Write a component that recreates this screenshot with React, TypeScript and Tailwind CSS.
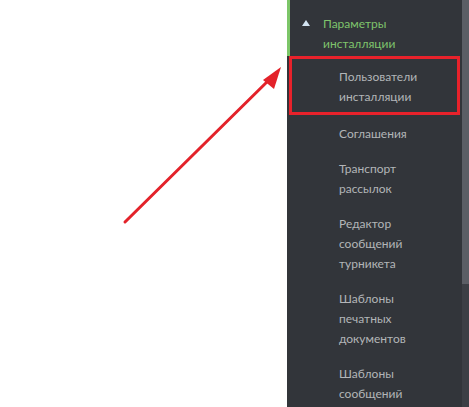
import React from 'react';

const items: string[][] = [
  ['Соглашения'],
  ['Транспорт', 'рассылок'],
  ['Редактор', 'сообщений', 'турникета'],
  ['Шаблоны', 'печатных', 'документов'],
  ['Шаблоны', 'сообщений'],
];

export default function App() {
  return (
    <div className="relative w-[469px] h-[407px] overflow-hidden flex bg-white font-['Lato',sans-serif] text-[12px] leading-[20px]">
      <div className="flex-1 bg-white" />

      {/* Side menu */}
      <div className="w-[182px] h-full flex bg-[#32353a]">
        <div className="flex-1 flex flex-col">
          <div className="h-[8px] bg-[#2c2f33]" />

          {/* Active group */}
          <div className="flex border-l-[3px] border-[#7cc668] pt-[14px] pb-[2px]">
            <div className="w-[33px] flex justify-end pr-[13px] pt-[6px]">
              <svg width="8" height="6" viewBox="0 0 8 6">
                <polygon points="4,0 8,6 0,6" fill="#d3e4f1" />
              </svg>
            </div>
            <div className="text-[#7fc46c]">
              <div>Параметры</div>
              <div>инсталляции</div>
            </div>
          </div>

          {/* Highlighted item */}
          <div className="mx-[2px] border-[3px] border-[#e8222b] pl-[47px] pt-[8px] pb-[5px] text-[#b3b5b8]">
            <div>Пользователи</div>
            <div>инсталляции</div>
          </div>

          {items.map((lines, i) => (
            <div key={i} className="pl-[52px] pt-[9px] pb-[6px] text-[#b3b5b8]">
              {lines.map((l, j) => (
                <div key={j}>{l}</div>
              ))}
            </div>
          ))}
        </div>

        {/* Scrollbar */}
        <div className="w-[7px] h-full flex flex-col bg-[#3c3f45]">
          <div className="h-[284px] bg-[#5b5e65]" />
        </div>
      </div>

      {/* Annotation arrow */}
      <svg className="absolute left-0 top-0 pointer-events-none" width="469" height="407">
        <line x1="125" y1="222" x2="272" y2="77" stroke="#e3222a" strokeWidth="3" strokeLinecap="round" />
        <polygon points="281,67 263,80 274,89" fill="#e3222a" />
      </svg>
    </div>
  );
}
